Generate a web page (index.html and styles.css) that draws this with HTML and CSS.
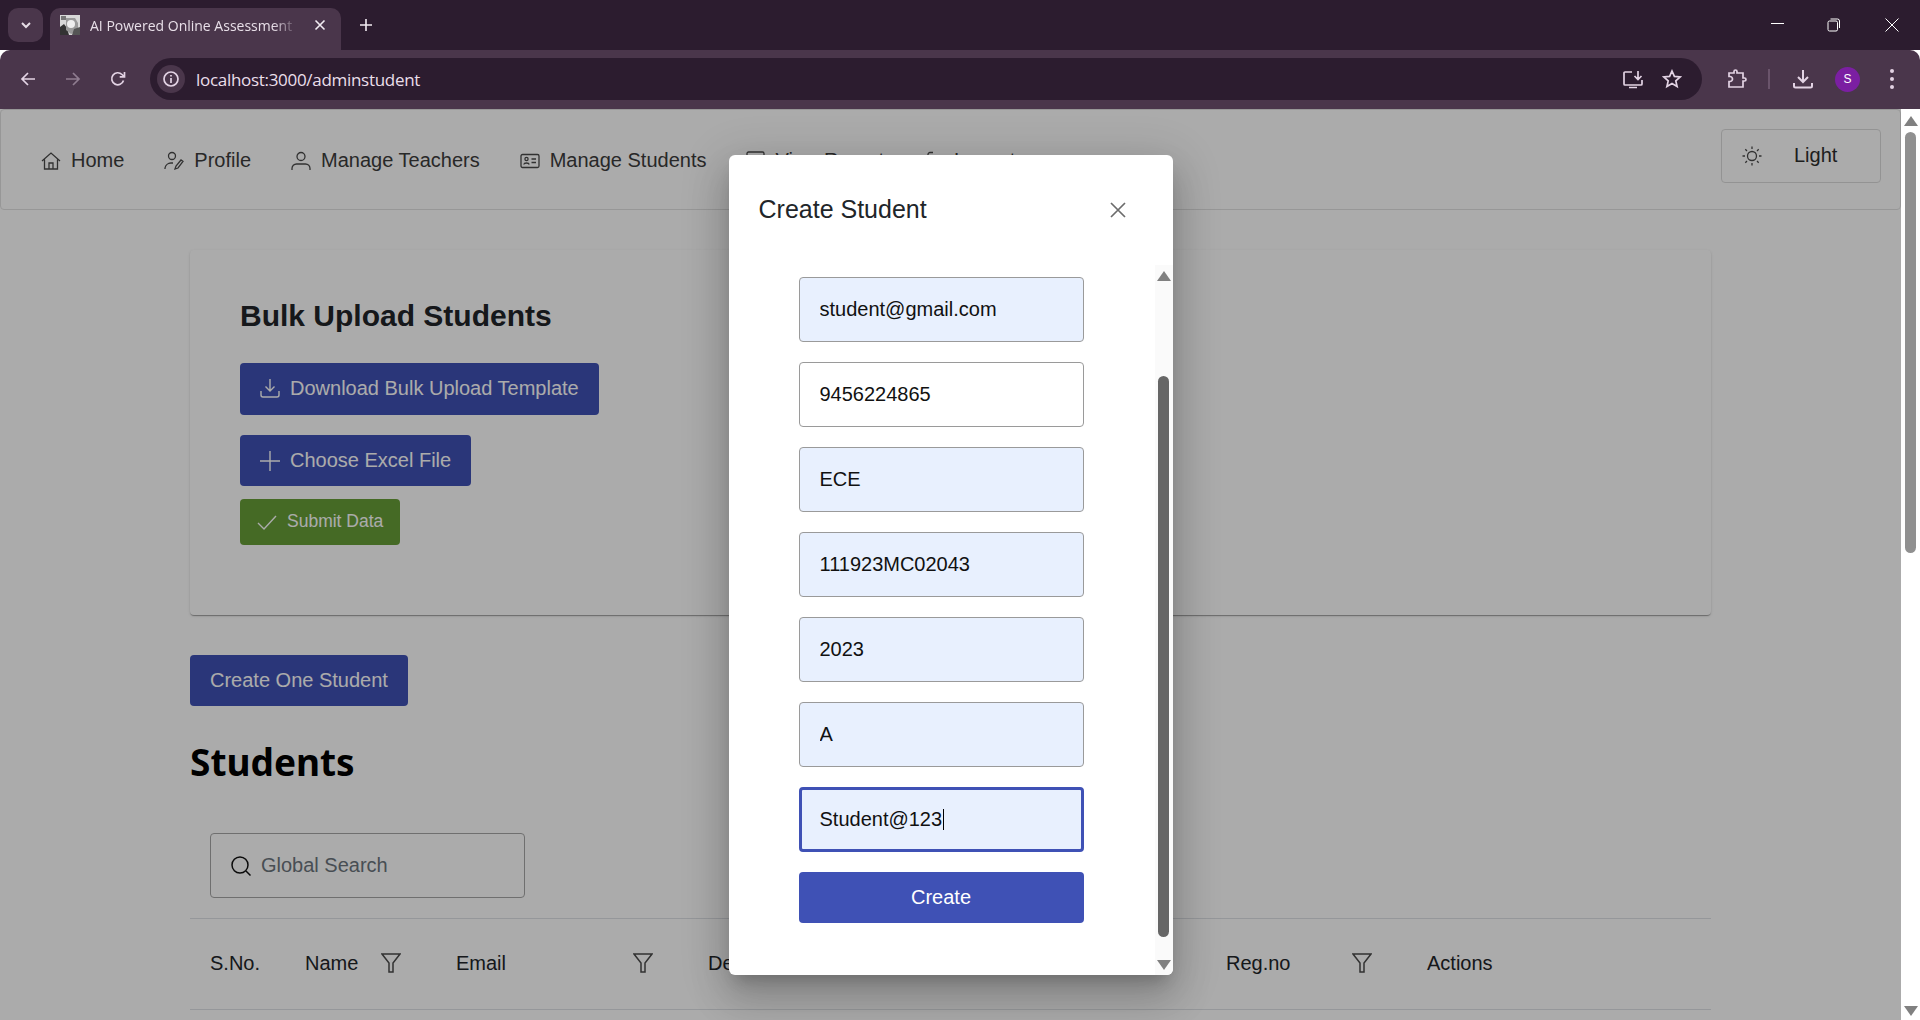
FILE: index.html
```html
<!DOCTYPE html>
<html lang="en">
<head>
<meta charset="utf-8">
<title>AI Powered Online Assessment</title>
<link rel="stylesheet" href="styles.css">
</head>
<body>
<div class="browser">
  <header class="tabstrip">
    <button class="tab-menu"><svg width="12" height="12" viewBox="0 0 12 12"><path d="M2 4l4 4 4-4" class="ic-light2"/></svg></button>
    <div class="tab">
      <svg class="favicon" width="20" height="20" viewBox="0 0 20 20"><rect width="20" height="20" fill="#d8d8d8"/><path d="M0 20V12l4-3 3 4 2 7z" fill="#333"/><path d="M6 3h9l3 5v8l-7 3-5-4z" fill="#9a9a9a"/><circle cx="11" cy="9" r="4" fill="#eee"/><path d="M14 14l6-2v8h-8z" fill="#555"/><path d="M1 1h5v4H1z" fill="#777"/></svg>
      <span class="tab-title">AI Powered Online Assessment</span>
      <svg class="tab-close" width="12" height="12" viewBox="0 0 12 12"><path d="M1.500 1.500l9 9M10.500 1.500l-9 9" class="ic-white"/></svg>
    </div>
    <svg class="new-tab" width="14" height="14" viewBox="0 0 14 14"><path d="M7 1v12M1 7h12" class="ic-white"/></svg>
    <div class="win-controls">
      <svg width="14" height="14" viewBox="0 0 14 14"><path d="M0 5.500h13" class="ic-thin"/></svg>
      <svg class="win-restore" width="14" height="14" viewBox="0 0 14 14"><rect x="1" y="3" width="9.500" height="10" rx="1.500" class="ic-thin"/><path d="M3.500 1h7a2 2 0 0 1 2 2v7" class="ic-thin"/></svg>
      <svg width="14" height="14" viewBox="0 0 14 14"><path d="M.5.5l13 13M13.500.5l-13 13" class="ic-thin"/></svg>
    </div>
  </header>

  <div class="toolbar">
    <svg class="tb-icon" width="16" height="16" viewBox="0 0 16 16"><path d="M15 8H2M8 2L2 8l6 6" class="ic-chrome"/></svg>
    <svg class="tb-icon dim" width="16" height="16" viewBox="0 0 16 16"><path d="M1 8h13M8 2l6 6-6 6" class="ic-chrome"/></svg>
    <svg class="tb-icon" width="16" height="16" viewBox="0 0 16 16"><path d="M13.500 9.500A6 6 0 1 1 12 3.500L14 5.500M14.500 1v4.800H9.700" class="ic-chrome"/></svg>
    <div class="omnibox">
      <span class="site-info"><svg width="16" height="16" viewBox="0 0 16 16"><circle cx="8" cy="8" r="7" class="ic-chrome"/><path d="M8 7v5M8 4v1.600" class="ic-chrome"/></svg></span>
      <span class="url">localhost:3000/adminstudent</span>
      <span class="omni-right">
        <svg width="22" height="22" viewBox="0 0 22 22"><path d="M10 4H3a1 1 0 0 0-1 1v11a1 1 0 0 0 1 1h16a1 1 0 0 0 1-1v-4M16 3v8M12.500 8l3.500 3.500L19.500 8M7 19.500h8" class="ic-chrome"/></svg>
        <svg width="20" height="20" viewBox="0 0 20 20"><path d="M10 2l2.400 5.400 5.800.6-4.400 3.900 1.300 5.700-5.100-3-5.100 3 1.300-5.700L1.800 8l5.800-.6z" class="ic-chrome"/></svg>
      </span>
    </div>
    <div class="tb-right">
      <svg width="20" height="20" viewBox="0 0 20 20"><path d="M2 4h5V2.500a1.500 1.500 0 0 1 3 0V4h6v5h1.500a1.500 1.500 0 0 1 0 3H16v6H2v-5.500h1a2.500 2.500 0 0 0 0-5H2z" class="ic-chrome"/></svg>
      <span class="tb-divider"></span>
      <svg width="20" height="20" viewBox="0 0 20 20"><path d="M10 1v12M5 8l5 5 5-5M1 14v3a1.500 1.500 0 0 0 1.500 1.500h15A1.500 1.500 0 0 0 19 17v-3" class="ic-chrome-bold"/></svg>
      <span class="avatar">S</span>
      <span class="dots"><i></i><i></i><i></i></span>
    </div>
  </div>

  <div class="viewport">
    <div class="page">
      <nav class="nav">
        <ul class="nav-items">
          <li class="nav-item"><svg width="20" height="20" viewBox="0 0 20 20"><path d="M1 10l9-8 9 8M3.500 8.500V18h13V8.500M8 18v-6h4v6" class="ic-nav"/></svg>Home</li>
          <li class="nav-item"><svg width="20" height="20" viewBox="0 0 20 20"><circle cx="8" cy="5" r="3.500" class="ic-nav"/><path d="M1 18v-1a6 6 0 0 1 6-5h2M11 18l1-3 5-6 2 1.500-5 6.500z" class="ic-nav"/></svg>Profile</li>
          <li class="nav-item"><svg width="20" height="20" viewBox="0 0 20 20"><circle cx="10" cy="5.500" r="4" class="ic-nav"/><path d="M1 19v-1.500A4.500 4.500 0 0 1 5.500 13h9a4.500 4.500 0 0 1 4.500 4.500V19" class="ic-nav"/></svg>Manage Teachers</li>
          <li class="nav-item"><svg width="20" height="20" viewBox="0 0 20 20"><rect x="1" y="3.500" width="18" height="13" rx="1.500" class="ic-nav"/><circle cx="6.500" cy="8" r="1.600" class="ic-nav"/><path d="M3.800 13.500c.3-2 5-2 5.400 0M11.500 8H16M11.500 11.500H16" class="ic-nav"/></svg>Manage Students</li>
          <li class="nav-item"><svg width="19" height="20" viewBox="0 0 19 20"><rect x="1" y="1" width="17" height="18" rx="1.500" class="ic-nav"/></svg>View Reports</li>
          <li class="nav-item nav-logout"><svg width="20" height="20" viewBox="0 0 20 20"><path d="M9 1.500H6a2 2 0 0 0-2 2V17a2 2 0 0 0 2 2h3M8 10h11M15 6l4 4-4 4" class="ic-nav"/></svg>Logout</li>
        </ul>
        <button class="theme-btn">
          <svg width="20" height="20" viewBox="0 0 20 20"><circle cx="10" cy="10" r="4.500" class="ic-nav"/><path d="M10 .5v2.500M10 17v2.500M.5 10H3M17 10h2.500M3.300 3.300L5 5M15 15l1.700 1.700M3.300 16.700L5 15M15 5l1.700-1.700" class="ic-nav"/></svg>
          <span>Light</span>
        </button>
      </nav>

      <main class="main">
        <section class="card">
          <h2 class="card-title">Bulk Upload Students</h2>
          <button class="btn btn-primary btn-first"><svg width="20" height="20" viewBox="0 0 20 20"><path d="M10 1v12M5.500 8.500L10 13l4.500-4.500M1 13v4a2 2 0 0 0 2 2h14a2 2 0 0 0 2-2v-4" class="ic-btn"/></svg>Download Bulk Upload Template</button>
          <button class="btn btn-primary btn-second"><svg width="20" height="20" viewBox="0 0 20 20"><path d="M10 0v20M0 10h20" class="ic-btn"/></svg>Choose Excel File</button>
          <button class="btn btn-success"><svg width="20" height="20" viewBox="0 0 20 20"><path d="M1 11l6 6L19 4" class="ic-btn"/></svg>Submit Data</button>
        </section>

        <button class="btn btn-primary btn-create-one">Create One Student</button>
        <h1 class="page-title">Students</h1>

        <div class="table-search">
          <label class="search-box">
            <svg width="20" height="20" viewBox="0 0 20 20"><circle cx="9" cy="9" r="8" class="ic-search"/><path d="M15 15l4.500 4.500" class="ic-search"/></svg>
            <span class="placeholder">Global Search</span>
          </label>
        </div>

        <div class="table-head">
          <div class="th">S.No.</div>
          <div class="th filter">Name<svg width="20" height="20" viewBox="0 0 20 20"><path d="M1 1h18l-7 9v9H8v-9z" class="ic-filter"/></svg></div>
          <div class="th filter">Email<svg width="20" height="20" viewBox="0 0 20 20"><path d="M1 1h18l-7 9v9H8v-9z" class="ic-filter"/></svg></div>
          <div class="th filter">Department<svg width="20" height="20" viewBox="0 0 20 20"><path d="M1 1h18l-7 9v9H8v-9z" class="ic-filter"/></svg></div>
          <div class="th filter">Batch<svg width="20" height="20" viewBox="0 0 20 20"><path d="M1 1h18l-7 9v9H8v-9z" class="ic-filter"/></svg></div>
          <div class="th filter">Section<svg width="20" height="20" viewBox="0 0 20 20"><path d="M1 1h18l-7 9v9H8v-9z" class="ic-filter"/></svg></div>
          <div class="th filter">Reg.no<svg width="20" height="20" viewBox="0 0 20 20"><path d="M1 1h18l-7 9v9H8v-9z" class="ic-filter"/></svg></div>
          <div class="th">Actions</div>
        </div>
      </main>

      <div class="backdrop">
        <div class="dialog">
          <div class="dialog-header">
            <span class="dialog-title">Create Student</span>
            <svg width="16" height="16" viewBox="0 0 16 16"><path d="M1 1l14 14M15 1L1 15" class="ic-close"/></svg>
          </div>
          <div class="dialog-body">
            <form class="form">
              <input class="field autofill" value="student@gmail.com" aria-label="Email">
              <input class="field" value="9456224865" aria-label="Phone">
              <input class="field autofill" value="ECE" aria-label="Department">
              <input class="field autofill" value="111923MC02043" aria-label="Register number">
              <input class="field autofill" value="2023" aria-label="Batch">
              <input class="field autofill" value="A" aria-label="Section">
              <div class="field autofill focused"><span>Student@123</span><i class="caret"></i></div>
              <button type="button" class="btn-submit">Create</button>
            </form>
            <div class="dialog-scroll">
              <span class="arrow-up"></span>
              <span class="dialog-thumb"></span>
              <span class="arrow-down"></span>
            </div>
          </div>
        </div>
      </div>
    </div>
    <aside class="page-scroll">
      <span class="arrow-up"></span>
      <span class="page-thumb"></span>
      <span class="arrow-down"></span>
    </aside>
  </div>
</div>
</body>
</html>
```

FILE: styles.css
```css
* { box-sizing: border-box; }
html, body { margin: 0; height: 100%; overflow: hidden; }
body { font-family: "Liberation Sans", Arial, sans-serif; background: #fff; color: #212529; }
button { font-family: inherit; border: 0; padding: 0; }
svg { display: block; flex: none; fill: none; }

.browser { display: flex; flex-direction: column; height: 1020px; }

.ic-white { stroke: #f2ecf2; stroke-width: 1.6; }
.ic-light2 { stroke: #e6dde6; stroke-width: 2; }
.ic-thin { stroke: #fff; stroke-width: 1; }
.ic-chrome { stroke: #e3d3e4; stroke-width: 1.7; }
.ic-chrome-bold { stroke: #e3d3e4; stroke-width: 2; }
.ic-nav { stroke: #4a4a4a; stroke-width: 1.3; }
.ic-btn { stroke: #fff; stroke-width: 1.4; }
.ic-search { stroke: #111; stroke-width: 1.5; }
.ic-filter { stroke: #4b4b4b; stroke-width: 1.5; }
.ic-close { stroke: #6c6c6c; stroke-width: 1.7; }

/* browser chrome */
.tabstrip { height: 50px; flex: none; background: #2c1c2f; display: flex; align-items: flex-end; padding-left: 8px; }
.tab-menu { width: 35px; height: 34px; margin-bottom: 8px; border-radius: 10px; background: #4a364b; display: flex; align-items: center; justify-content: center; }
.tab { width: 291px; height: 42px; margin-left: 7px; background: #4a364b; border-radius: 10px 10px 0 0; display: flex; align-items: center; padding: 0 10px 8px; color: #e8dfe8; font: 14px "Open Sans", "Noto Sans", sans-serif; }
.favicon { margin-right: 10px; }
.tab-title { width: 208px; white-space: nowrap; overflow: hidden; font-size: 14px; -webkit-mask-image: linear-gradient(to right, #000 88%, transparent); mask-image: linear-gradient(to right, #000 88%, transparent); }
.tab-close { margin-left: 16px; }
.new-tab { margin: 0 0 18px 18px; }
.win-controls { margin-left: auto; align-self: flex-start; display: flex; gap: 43px; padding: 18px 21px 0 0; }
.win-restore { margin: 0 1px 0 -1px; }

.toolbar { height: 59px; flex: none; background: #4a364b; border-radius: 10px 10px 0 0; display: flex; align-items: center; padding: 0 0 1px 20px; gap: 29px; }
.tb-icon.dim { opacity: .45; }
.omnibox { width: 1552px; height: 42px; margin-left: -5px; border-radius: 21px; background: #2c1c2f; display: flex; align-items: center; padding: 0 13px 0 7px; }
.site-info { width: 28px; height: 28px; border-radius: 50%; background: #4a364b; display: flex; align-items: center; justify-content: center; }
.url { margin-left: 11px; color: #eadfea; font: 17px "Open Sans", "Noto Sans", sans-serif; letter-spacing: -.3px; }
.omni-right { margin-left: auto; display: flex; align-items: center; gap: 18px; padding-right: 7px; }
.tb-right { display: flex; align-items: center; margin-left: -4px; }
.tb-divider { width: 2px; height: 20px; background: #6a546b; margin: 0 23px 0 21px; }
.avatar { width: 25px; height: 25px; border-radius: 50%; background: #7b1fa2; color: #fff; font-size: 12px; display: flex; align-items: center; justify-content: center; margin-left: 22px; }
.dots { display: flex; flex-direction: column; gap: 4px; margin-left: 30px; }
.dots i { width: 4px; height: 4px; border-radius: 50%; background: #e3d3e4; }

/* page */
.viewport { flex: 1; display: flex; min-height: 0; }
.page { flex: 1; position: relative; overflow: hidden; background: #fff; }

.nav { height: 101px; border: 1px solid #e2e2e2; border-radius: 4px; display: flex; align-items: flex-start; padding-left: 40px; background: #fff; }
.nav-items { list-style: none; margin: 0; padding: 2px 0 0; display: flex; gap: 40px; height: 100%; align-items: center; }
.nav-item { display: flex; align-items: center; gap: 10px; font-size: 20px; color: #3c3c3c; white-space: nowrap; }
.nav-logout { margin-left: -10px; }
.theme-btn { margin: 19px 19px 0 auto; width: 160px; height: 54px; background: #fff; border: 1px solid #dcdcdc; border-radius: 4px; display: flex; align-items: center; padding-left: 20px; font-size: 20px; color: #2e2e2e; }
.theme-btn span { margin-left: 32px; margin-top: -2px; }

.main { width: 1521px; margin: 40px auto 0; }
.card { height: 365px; padding: 49px 50px 50px; background: #fff; border-radius: 4px; box-shadow: 0 2px 1px -1px rgba(0,0,0,.2), 0 1px 1px 0 rgba(0,0,0,.14), 0 1px 3px 0 rgba(0,0,0,.12); display: flex; flex-direction: column; align-items: flex-start; }
.card-title { margin: 0 0 30px; font-size: 30px; line-height: 34px; font-weight: 700; color: #212529; }

.btn { display: flex; align-items: center; color: #fff; border-radius: 4px; font-size: 20px; white-space: nowrap; }
.btn svg { margin-right: 10px; }
.btn-primary { background: #3f51b5; padding: 0 20px; }
.btn-first { height: 52px; margin-bottom: 20px; padding-bottom: 2px; }
.btn-second { height: 51px; margin-bottom: 13px; }
.btn-success { height: 46px; background: #689f38; padding: 0 17px 1px; font-size: 17.5px; }
.btn-create-one { height: 51px; margin-top: 40px; }

.page-title { margin: 26px 0 0; font: 700 37px/60px "Noto Sans", "Open Sans", sans-serif; color: #000; }

.table-search { padding: 41px 20px 20px; border-bottom: 1px solid #dee2e6; }
.search-box { width: 315px; height: 65px; border: 1px solid #a6a6a6; border-radius: 4px; display: flex; align-items: center; padding-left: 20px; gap: 10px; background: #fff; }
.placeholder { font-size: 20px; color: #6c757d; }

.table-head { display: grid; grid-template-columns: 95px 151px 252px 180px 170px 168px 201px 1fr; height: 91px; border-bottom: 1px solid #dee2e6; }
.th { display: flex; align-items: center; padding: 0 20px 2px; font-size: 20px; color: #212529; white-space: nowrap; }
.th.filter { justify-content: space-between; padding-right: 35px; }

/* dialog */
.backdrop { position: absolute; inset: 0; padding-top: 1px; background: rgba(0,0,0,.33); display: flex; align-items: center; justify-content: center; }
.dialog { width: 444px; height: 820px; background: #fff; border-radius: 6px; overflow: hidden; display: flex; flex-direction: column; box-shadow: 0 11px 15px -7px rgba(0,0,0,.2), 0 24px 38px 3px rgba(0,0,0,.14), 0 9px 46px 8px rgba(0,0,0,.12); }
.dialog-header { height: 110px; flex: none; display: flex; align-items: center; justify-content: space-between; padding: 0 47px 1px 30px; }
.dialog-title { font-size: 25px; color: #212529; }
.dialog-body { flex: 1; display: flex; min-height: 0; }
.form { flex: 1; padding: 12px 71px 0 70px; display: flex; flex-direction: column; gap: 20px; }
.field { height: 65px; width: 100%; border: 1px solid #9a9a9a; border-radius: 4px; padding: 0 20px; font: 20px "Liberation Sans", Arial, sans-serif; color: #111; background: #fff; outline: 0; }
.autofill { background: #e8f0fe; }
.focused { border: 3px solid #3f51b5; padding: 0 18px; display: flex; align-items: center; }
.caret { width: 1px; height: 21px; background: #000; margin-left: 1px; }
.btn-submit { height: 51px; border-radius: 4px; background: #3f51b5; color: #fff; font-size: 20px; }

.dialog-scroll { width: 18px; flex: none; background: #fafafa; display: flex; flex-direction: column; align-items: center; padding-top: 6px; }
.dialog-thumb { width: 11px; height: 561px; margin-top: 95px; border-radius: 6px; background: #666; }
.arrow-up, .arrow-down { width: 0; height: 0; border-left: 7px solid transparent; border-right: 7px solid transparent; }
.arrow-up { border-bottom: 10px solid #808080; }
.arrow-down { border-top: 10px solid #808080; }
.dialog-scroll .arrow-down { margin-top: 23px; }

.page-scroll { width: 19px; flex: none; background: #fff; display: flex; flex-direction: column; align-items: center; padding-top: 7px; }
.page-thumb { width: 11px; height: 421px; margin-top: 6px; border-radius: 6px; background: #909090; }
.page-scroll .arrow-down { margin-top: 453px; }
```
